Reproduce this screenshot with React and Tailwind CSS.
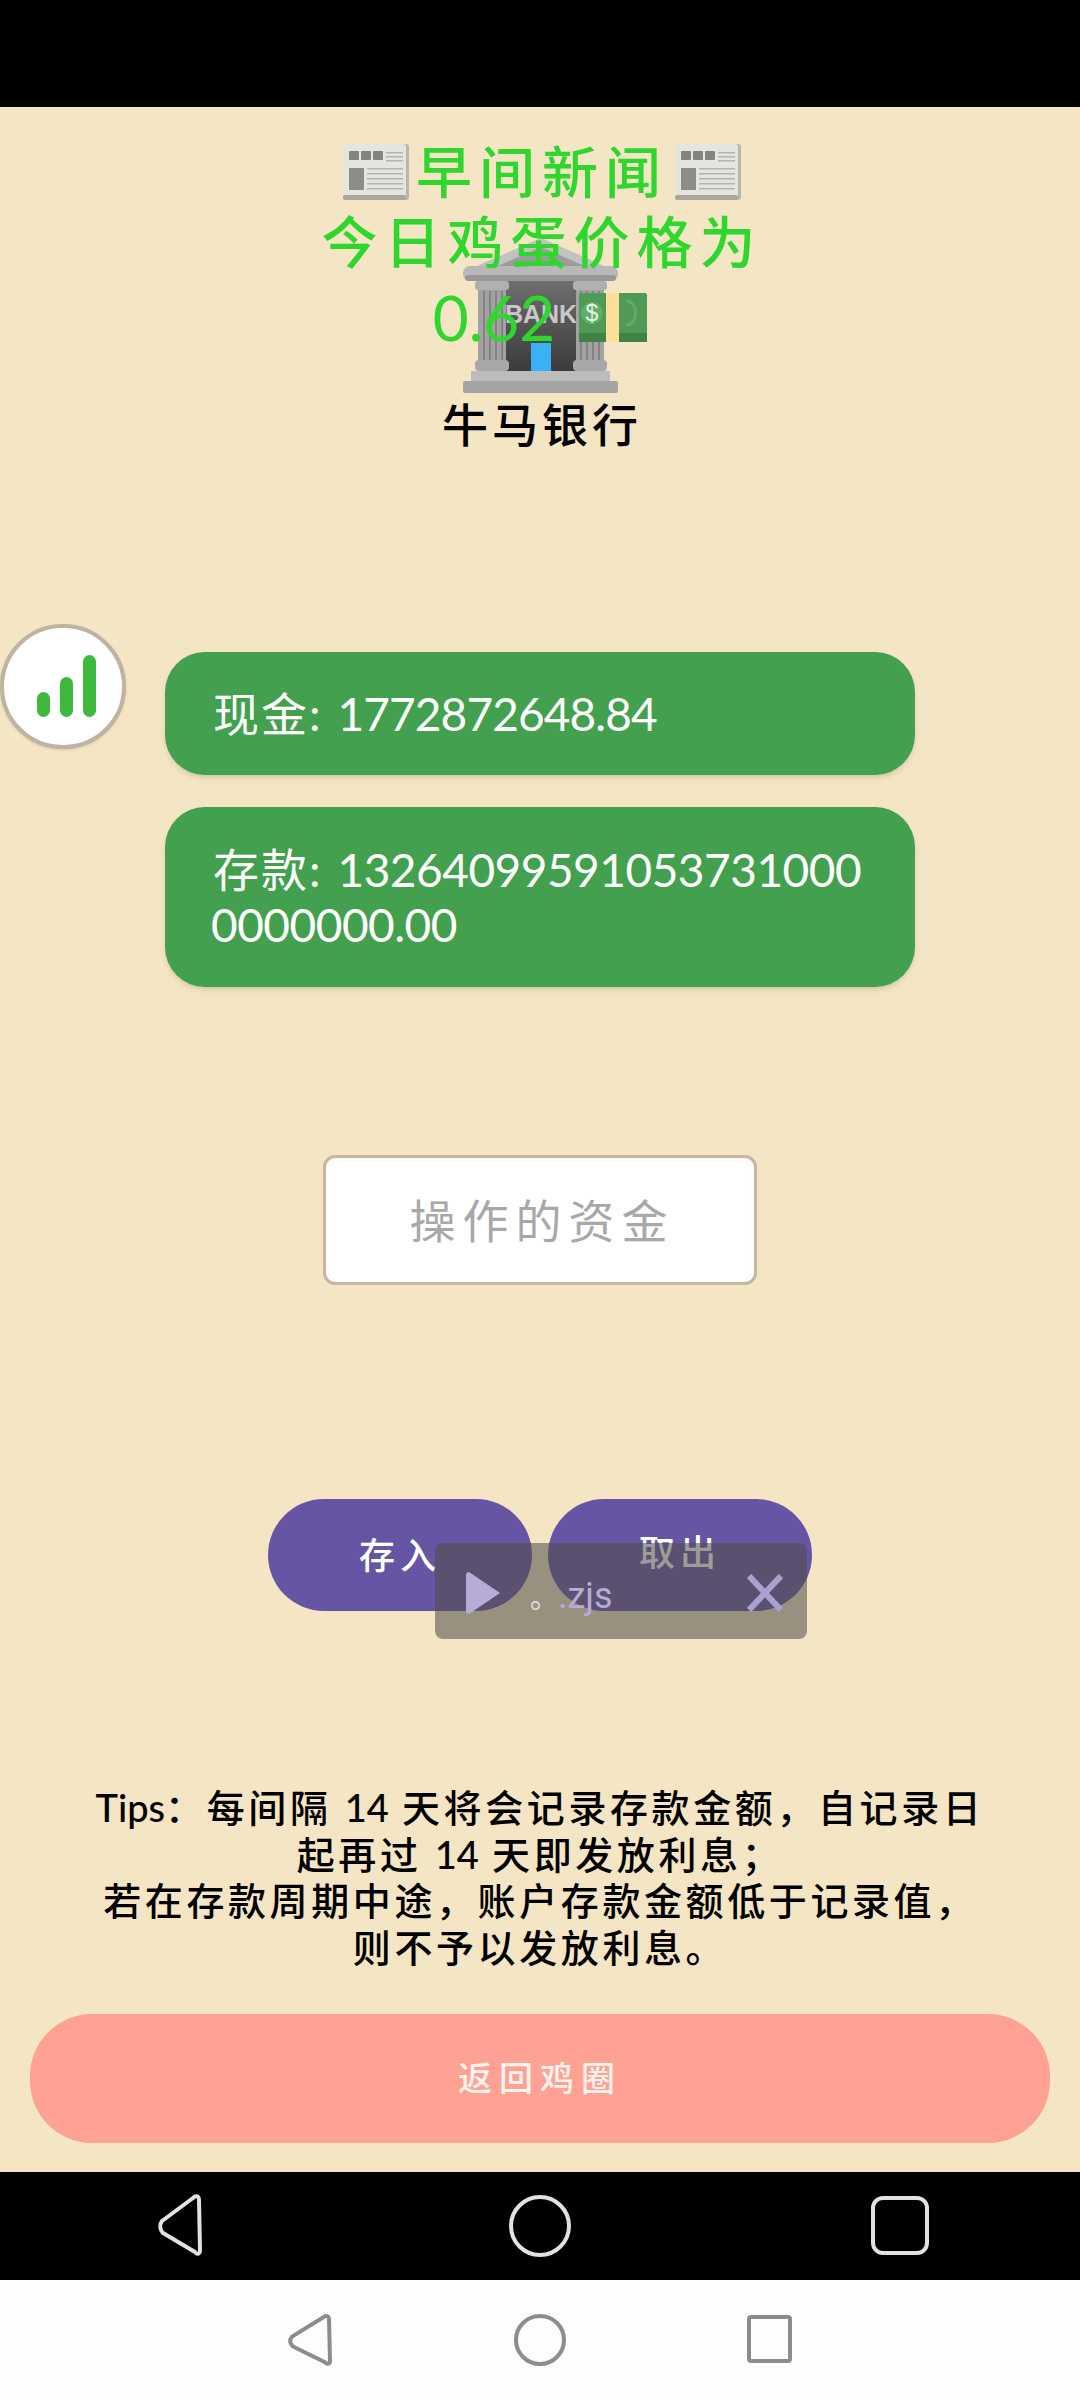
const cjk = "font-['Lato','Noto_Sans_CJK_SC',sans-serif]";

function Newspaper() {
  return (
    <svg width="68" height="58" viewBox="0 0 68 58" className="shrink-0">
      <rect x="3" y="1" width="64" height="56" rx="3" fill="#b9b6ae" />
      <rect x="1" y="1" width="63" height="56" rx="3" fill="#e6e4de" />
      <rect x="1" y="52" width="63" height="5" rx="2" fill="#a9a69e" />
      <rect x="7" y="8" width="10" height="9" rx="1" fill="#85837e" />
      <rect x="19" y="8" width="10" height="9" rx="1" fill="#85837e" />
      <rect x="31" y="8" width="10" height="9" rx="1" fill="#85837e" />
      <rect x="7" y="25" width="15" height="22" fill="#8e8c87" />
      {[9, 13, 17].map((y) => (
        <rect key={y} x="44" y={y} width="17" height="1.5" fill="#b5b3ad" />
      ))}
      {[25, 30, 35, 40, 45].map((y) => (
        <rect key={y} x="25" y={y} width="36" height="1.5" fill="#b5b3ad" />
      ))}
    </svg>
  );
}

function Bank() {
  const flutes = [20, 26, 32, 38, 117, 123, 129, 135];
  return (
    <svg width="155" height="155" viewBox="0 0 155 155">
      <defs>
        <linearGradient id="door" x1="0" y1="0" x2="0" y2="1">
          <stop offset="0" stopColor="#6e6e6e" />
          <stop offset="1" stopColor="#3b3b3b" />
        </linearGradient>
      </defs>
      <path d="M78 0 L146 30 L9 30 Z" fill="#c2c2c2" />
      <path d="M78 9 L126 30 L30 30 Z" fill="#9c9c9c" />
      <rect x="0" y="28" width="155" height="15" rx="7" fill="#b8b8b8" />
      <rect x="2" y="37" width="151" height="6" rx="3" fill="#989898" />
      <rect x="43" y="43" width="70" height="90" fill="url(#door)" />
      <rect x="15" y="43" width="28" height="90" fill="#a2a2a2" />
      <rect x="113" y="43" width="28" height="90" fill="#a2a2a2" />
      {flutes.map((x) => (
        <rect key={x} x={x} y="53" width="2" height="70" fill="#838383" />
      ))}
      <rect x="12" y="43" width="34" height="9" rx="3" fill="#b0b0b0" />
      <rect x="110" y="43" width="34" height="9" rx="3" fill="#b0b0b0" />
      <rect x="12" y="122" width="34" height="11" rx="4" fill="#a8a8a8" />
      <rect x="110" y="122" width="34" height="11" rx="4" fill="#a8a8a8" />
      <text x="78" y="85" textAnchor="middle" fontFamily="Liberation Sans" fontSize="25" fontWeight="700" fill="#c8c8c8">
        BANK
      </text>
      <rect x="68" y="105" width="20" height="29" fill="#3ab0f5" />
      <rect x="8" y="133" width="139" height="10" fill="#bcbcbc" />
      <rect x="0" y="143" width="155" height="12" rx="2" fill="#a4a4a4" />
    </svg>
  );
}

function Cash() {
  return (
    <svg width="68" height="49" viewBox="0 0 68 49" className="shrink-0">
      <rect x="0" y="0" width="68" height="49" rx="2" fill="#4f9a55" />
      <rect x="0" y="40" width="68" height="9" fill="#3f8348" />
      <rect x="27" y="0" width="13" height="49" fill="#fbdf9a" />
      <circle cx="13" cy="20" r="11" fill="#5fae66" />
      <text x="13" y="28" textAnchor="middle" fontFamily="Liberation Sans" fontSize="23" fill="#e8f3e4">
        $
      </text>
      <path d="M47 8 C60 8 60 32 47 32" fill="none" stroke="#6aa56a" strokeWidth="3" />
    </svg>
  );
}

function NavIcons({ color, positions }) {
  return (
    <svg width="1080" height={positions.h} viewBox={`0 0 1080 ${positions.h}`} className="block">
      <g fill="none" stroke={color} strokeWidth="4" strokeLinejoin="round">
        <path
          transform={`translate(${positions.tri[0]} ${positions.tri[1]}) scale(${positions.tri[2]} ${positions.tri[3]})`}
          vectorEffect="non-scaling-stroke"
          d="M35 3 C38 0 41 1 41 5 L42 55 C42 59 39 60 37 57 L5 38 C2 35 1 30 4 26 Z"
        />
        <circle cx="540" cy={positions.h / 2} r={positions.r} />
        <rect
          x={positions.sq[0]}
          y={positions.sq[1]}
          width={positions.sq[2]}
          height={positions.sq[3]}
          rx={positions.sq[4]}
        />
      </g>
    </svg>
  );
}

export default function App() {
  return (
    <div className={`flex h-[2400px] w-[1080px] flex-col overflow-hidden bg-black ${cjk}`}>
      <div className="h-[107px] shrink-0 bg-black" />

      <main className="relative flex h-[2065px] shrink-0 flex-col items-center bg-[#f4e5c4]">
        <div className="pt-[131px]">
          <Bank />
        </div>
        <h1 className="mt-[10px] pl-[4px] text-[46px] leading-[44px] font-medium tracking-[4px] text-black">牛马银行</h1>

        <div className="mt-[205px] flex h-[123px] w-[750px] items-center rounded-[40px] bg-[#43a04e] px-[48px] text-[46px] tracking-[-0.9px] text-white shadow-md">
          <span className="mr-[15px] tracking-[2px]">现金:</span>
          <span>1772872648.84</span>
        </div>
        <div className="mt-[32px] flex h-[180px] w-[750px] flex-col justify-center rounded-[40px] bg-[#43a04e] pl-[46px] text-[46px] leading-[55px] tracking-[-0.5px] whitespace-nowrap text-white shadow-md">
          <div className="flex">
            <span className="mr-[15px] ml-[2px] tracking-[2px]">存款:</span>
            <span>13264099591053731000</span>
          </div>
          <div>0000000.00</div>
        </div>

        <input
          placeholder="操作的资金"
          className="mt-[168px] h-[130px] w-[434px] rounded-[12px] border-[3px] border-[#c4b99f] bg-white pl-[4px] text-center text-[46px] tracking-[7px] shadow-inner outline-none placeholder:text-[#a8a8a8]"
        />

        <div className="mt-[214px] flex gap-[16px]">
          <button className="h-[112px] w-[264px] rounded-full bg-[#6654a5] text-[36px] font-medium tracking-[5px] text-white">
            存入
          </button>
          <button className="h-[112px] w-[264px] rounded-full bg-[#6654a5] pb-[6px] text-[36px] font-medium tracking-[5px] text-white">
            取出
          </button>
        </div>

        <div className="mt-[173px] w-[1000px] text-center text-[38px] leading-[46.7px] font-medium tracking-[3.6px] text-black">
          <p>
            <span className="tracking-normal">Tips</span>：每间隔 <span className="tracking-normal">14</span> 天将会记录存款金额，自记录日
          </p>
          <p>
            起再过 <span className="tracking-normal">14</span> 天即发放利息；
          </p>
          <p>若在存款周期中途，账户存款金额低于记录值，</p>
          <p>则不予以发放利息。</p>
        </div>

        <button className="mt-[43px] h-[129px] w-[1020px] rounded-[62px] bg-[#ffa193] pb-[2px] text-[34px] font-medium tracking-[7px] text-[#fff3ef]">
          返回鸡圈
        </button>

        {/* news headline sits on top of the bank emoji */}
        <div className="absolute top-[30px] left-0 flex w-full flex-col items-center pl-[4px] text-[56px] font-medium tracking-[7px] text-[#2ed62e]">
          <div className="flex h-[70px] items-center gap-[6px]">
            <Newspaper />
            <span>早间新闻</span>
            <Newspaper />
          </div>
          <div className="flex h-[70px] items-center">今日鸡蛋价格为</div>
          <div className="flex h-[80px] items-center gap-[24px] pr-[4px] text-[62px] font-normal tracking-[0px]">
            <span>0.62</span>
            <Cash />
          </div>
        </div>

        {/* floating stats button */}
        <div className="absolute top-[517px] left-0 flex h-[125px] w-[126px] items-end justify-center gap-[10px] rounded-full border-[4px] border-[#bdb4a1] bg-white pb-[28px] pl-[6px] shadow">
          <span className="h-[25px] w-[13px] rounded-full bg-[#3dba3d]" />
          <span className="h-[40px] w-[13px] rounded-full bg-[#3dba3d]" />
          <span className="h-[62px] w-[13px] rounded-full bg-[#3dba3d]" />
        </div>

        {/* floating script toast */}
        <div className="absolute top-[1436px] left-[435px] flex h-[96px] w-[372px] items-center rounded-lg bg-[rgba(80,78,74,0.56)] pt-[4px] pr-[24px] pl-[31px]">
          <svg width="34" height="42" viewBox="0 0 34 42" className="shrink-0">
            <path d="M3 0 L34 21 L3 42 Q0 42 0 38 L0 4 Q0 0 3 0 Z" fill="#b6acd6" />
          </svg>
          <span className="mt-[6px] ml-[30px] flex items-baseline font-['Roboto','Noto_Sans_CJK_SC',sans-serif] text-[36px] text-[#b6acd6]">
            <span className="text-[28px] text-[#e4e0ee]">。</span>
            <span>.zjs</span>
          </span>
          <svg width="36" height="38" viewBox="0 0 36 38" className="ml-auto shrink-0">
            <path d="M2 2 L34 36 M34 2 L2 36" stroke="#aba1cf" strokeWidth="6" />
          </svg>
        </div>
      </main>

      <div className="h-[108px] shrink-0 bg-black">
        <NavIcons
          color="#e2e2e2"
          positions={{ h: 108, r: 29, tri: [158, 23, 1, 1], sq: [873, 26, 54, 55, 10] }}
        />
      </div>
      <div className="h-[120px] shrink-0 bg-[#fdfdfd]">
        <NavIcons
          color="#8c8c8c"
          positions={{ h: 120, r: 24, tri: [288, 35, 1, 0.83], sq: [749, 37, 41, 44, 2] }}
        />
      </div>
    </div>
  );
}
